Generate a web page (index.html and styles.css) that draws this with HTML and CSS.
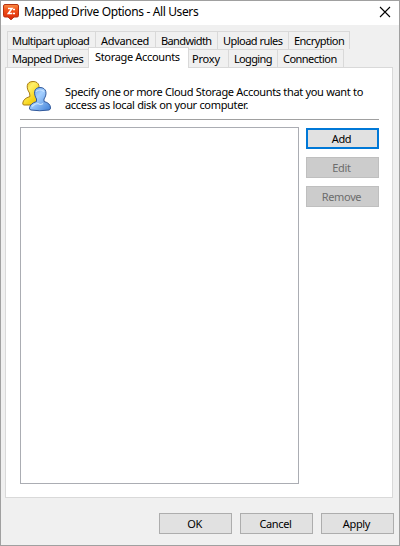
FILE: index.html
```html
<!DOCTYPE html>
<html lang="en">
<head>
    <meta charset="UTF-8">
    <meta name="viewport" content="width=device-width, initial-scale=1.0">
    <title>Mapped Drive Options - All Users</title>
    <link rel="stylesheet" href="styles.css">
</head>
<body>
    <div class="window">
        <div class="titlebar">
            <svg class="logo" width="16" height="17" viewBox="0 0 16 17">
                <defs>
                    <linearGradient id="red" x1="0" y1="0" x2="0" y2="1">
                        <stop offset="0" stop-color="#f98c45"/>
                        <stop offset="0.35" stop-color="#f2541b"/>
                        <stop offset="1" stop-color="#d92405"/>
                    </linearGradient>
                </defs>
                <path d="M2 .5h12q1.500 0 1.500 1.500v9.500q0 1.500-1.500 1.500h-3L8 15.800 5 13H2Q.5 13 .5 11.500V2Q.5 .5 2 .5z" fill="url(#red)" stroke="#b83210"/>
                <path d="M5 4.500h4L5.300 9.500h4" fill="none" stroke="#fff" stroke-width="1.500"/>
                <path d="M10 5.500h2M10 9.500h2" stroke="#fff" stroke-width="1.500"/>
            </svg>
            <span class="title">Mapped Drive Options - All Users</span>
            <svg class="close" width="12" height="12" viewBox="0 0 12 12">
                <path d="M1 1l10 10M11 1L1 11" stroke="#000" stroke-width="1.100"/>
            </svg>
        </div>

        <div class="tabs">
            <div class="tab-row back">
                <div class="tab multipart">Multipart upload</div>
                <div class="tab advanced">Advanced</div>
                <div class="tab bandwidth">Bandwidth</div>
                <div class="tab upload">Upload rules</div>
                <div class="tab encryption last">Encryption</div>
            </div>
            <div class="tab-row front">
                <div class="tab mapped">Mapped Drives</div>
                <div class="tab storage active">Storage Accounts</div>
                <div class="tab proxy">Proxy</div>
                <div class="tab logging">Logging</div>
                <div class="tab connection last">Connection</div>
            </div>
        </div>

        <div class="panel">
            <div class="info">
                <svg class="users" width="30" height="32" viewBox="0 0 30 32">
                    <defs>
                        <linearGradient id="gold" x1="0" y1="0" x2="1" y2="1">
                            <stop offset="0" stop-color="#e3b000"/>
                            <stop offset="0.3" stop-color="#fff06a"/>
                            <stop offset="0.6" stop-color="#f7d51c"/>
                            <stop offset="1" stop-color="#e3b200"/>
                        </linearGradient>
                        <linearGradient id="blue" x1="0" y1="0" x2="1" y2="1">
                            <stop offset="0" stop-color="#5b9ae6"/>
                            <stop offset="0.4" stop-color="#a5d0ff"/>
                            <stop offset="1" stop-color="#3f7fd6"/>
                        </linearGradient>
                    </defs>
                    <path d="M7.500 13C4 8 4 1.500 11 1.500S18 8 15.500 13v3l6 4v5H2q-1.500 0-1.200-2 .5-4.500 7.200-6.500z" fill="url(#gold)" stroke="#a77c13"/>
                    <path d="M14.500 19C11.500 14 11.500 7.500 18 7.500S25.500 14 22 19v2.500q6.500 1.500 6.500 6.500 0 1.500-1.500 2-9.500 1.500-18 0-1.800-.4-1.500-2 .7-4.500 7-6.500z" fill="url(#blue)" stroke="#31599c"/>
                    <path d="M14 11.500q4-3 8 0M10 26.500q3-3 6-3 2.500 2 5 0" fill="none" stroke="#c9e3ff" stroke-width="1.200"/>
                </svg>
                <p class="description">Specify one or more Cloud Storage Accounts that you want to<br>access as local disk on your computer.</p>
            </div>
            <div class="content">
                <div class="list"></div>
                <div class="actions">
                    <button class="button default">Add</button>
                    <button class="button" disabled>Edit</button>
                    <button class="button" disabled>Remove</button>
                </div>
            </div>
        </div>

        <div class="footer">
            <button class="button">OK</button>
            <button class="button">Cancel</button>
            <button class="button">Apply</button>
        </div>
    </div>
</body>
</html>
```
FILE: styles.css
```css
* {
    box-sizing: border-box;
}
body {
    margin: 0;
    font-family: "Noto Sans", "Open Sans", sans-serif;
    font-size: 11px;
    color: #000;
}
.window {
    width: 400px;
    height: 546px;
    border: 1px solid #a0a0a0;
    background: #f0f0f0;
}
.titlebar {
    display: flex;
    align-items: flex-start;
    height: 24px;
    padding: 3px 8px 0 2px;
    background: #fff;
}
.title {
    margin-left: 5px;
    font-size: 12px;
    line-height: 16px;
    letter-spacing: -0.37px;
    white-space: nowrap;
}
.close {
    margin: 2px 0 0 auto;
}
.tabs {
    padding: 6px 0 0 6px;
}
.tab-row {
    display: flex;
    align-items: flex-end;
    height: 18px;
}
.tab {
    height: 18px;
    padding-left: 5px;
    border-top: 1px solid #d9d9d9;
    border-left: 1px solid #d9d9d9;
    line-height: 18px;
    letter-spacing: -0.52px;
    white-space: nowrap;
}
.tab.last {
    border-right: 1px solid #d9d9d9;
}
.multipart {
    width: 88px;
    padding-left: 4px;
    letter-spacing: -0.6px;
}
.advanced {
    width: 60px;
    letter-spacing: -0.32px;
}
.bandwidth {
    width: 62px;
    letter-spacing: -0.6px;
}
.upload {
    width: 71px;
}
.encryption {
    width: 62px;
}
.mapped {
    width: 81px;
    padding-left: 4px;
}
.storage {
    width: 101px;
    padding-left: 6px;
    letter-spacing: -0.33px;
}
.proxy {
    width: 39px;
    padding-left: 3px;
    border-left: none;
    letter-spacing: -0.2px;
}
.logging {
    width: 49px;
    letter-spacing: -0.65px;
}
.connection {
    width: 67px;
}
.tab.active {
    height: 21px;
    margin-bottom: -1px;
    border-right: 1px solid #d9d9d9;
    background: #fff;
    z-index: 1;
}
.panel {
    width: 388px;
    height: 431px;
    margin-left: 4px;
    padding: 12px 13px 0 14px;
    border: 1px solid #d9d9d9;
    background: #fff;
}
.info {
    display: flex;
    height: 40px;
    border-bottom: 1px solid #a0a0a0;
}
.users {
    margin-left: 2px;
}
.description {
    margin: 5px 0 0 13px;
    line-height: 13px;
    letter-spacing: -0.32px;
    white-space: nowrap;
}
.content {
    display: flex;
    gap: 7px;
    padding-top: 7px;
}
.list {
    width: 279px;
    height: 357px;
    border: 1px solid #abadb3;
}
.actions {
    display: flex;
    flex-direction: column;
    gap: 8px;
    padding-top: 1px;
}
.button {
    width: 73px;
    height: 21px;
    padding: 0 2px 0 0;
    border: 1px solid #adadad;
    background: #e1e1e1;
    color: #000;
    font-family: inherit;
    font-size: 11px;
    line-height: 17px;
    letter-spacing: -0.35px;
}
.button.default {
    border: 2px solid #0078d7;
}
.button:disabled {
    border-color: #bfbfbf;
    background: #ccc;
    color: #6d6d6d;
}
.footer {
    display: flex;
    justify-content: flex-end;
    gap: 8px;
    padding: 15px 5px 0 0;
}
```
